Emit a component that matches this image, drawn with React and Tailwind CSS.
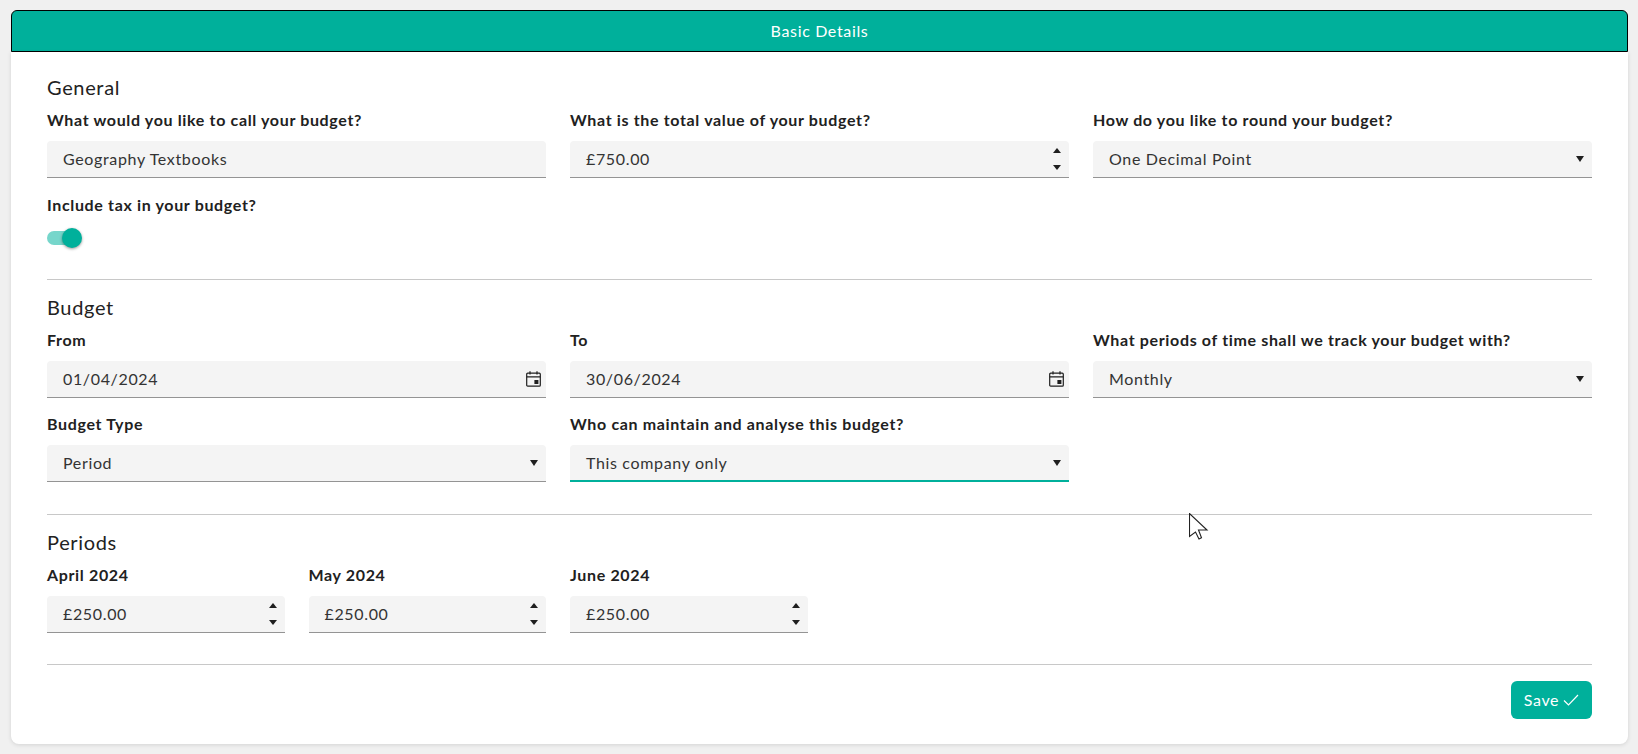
const font = { fontFamily: '"Lato", "Noto Sans", sans-serif' };

function Label({ children }) {
  return <div className="h-6 mb-[9px] text-[16px] leading-6 font-bold text-[#212121] whitespace-nowrap">{children}</div>;
}

function Stepper() {
  return (
    <div className="flex flex-col gap-3 items-center">
      <svg width="8" height="5" viewBox="0 0 8 5"><path d="M4 0L8 5H0z" fill="#1f1f1f" /></svg>
      <svg width="8" height="5" viewBox="0 0 8 5"><path d="M0 0h8L4 5z" fill="#1f1f1f" /></svg>
    </div>
  );
}

function Caret() {
  return <svg width="8" height="6" viewBox="0 0 8 6"><path d="M0 0h8L4 6z" fill="#1f1f1f" /></svg>;
}

function Calendar() {
  return (
    <svg className="-mr-[3px]" width="15" height="16" viewBox="0 0 15 16" fill="none" stroke="#1f1f1f" strokeWidth="1.2">
      <rect x="0.7" y="2.2" width="13.6" height="13" rx="1" />
      <path d="M0.7 5.8h13.6M4 0.3v3.2M11 0.3v3.2" />
      <rect x="8.4" y="9" width="4" height="4" fill="#1f1f1f" stroke="none" />
    </svg>
  );
}

function Field({ label, value, icon, focus }) {
  return (
    <div className="min-w-0">
      <Label>{label}</Label>
      <div className={`h-[37px] flex items-center justify-between pl-4 pr-2 bg-[#f4f4f4] rounded-t text-[16px] text-[#333] ${focus ? 'border-b-2 border-[#00b09b]' : 'border-b border-[#949494]'}`}>
        <span>{value}</span>
        {icon}
      </div>
    </div>
  );
}

function Heading({ children }) {
  return <div className="h-7 mb-[7px] text-[20px] leading-7 text-[#222]">{children}</div>;
}

export default function App() {
  return (
    <div style={font} className="relative h-[754px] bg-[#f0f0f0] pt-[10px] pl-[11px] pr-[10px] overflow-hidden tracking-[0.65px]">
      <div className="h-[42px] flex items-center justify-center bg-[#00b09b] border border-black rounded-t-md text-white text-[16px]">
        Basic Details
      </div>
      <div className="h-[692px] bg-white rounded-b-lg shadow-[0_1px_4px_rgba(0,0,0,0.12)] px-9 pt-[21px]">
        <Heading>General</Heading>
        <div className="grid grid-cols-3 gap-x-6">
          <Field label="What would you like to call your budget?" value="Geography Textbooks" />
          <Field label="What is the total value of your budget?" value="£750.00" icon={<Stepper />} />
          <Field label="How do you like to round your budget?" value="One Decimal Point" icon={<Caret />} />
        </div>
        <div className="mt-[15px]">
          <Label>Include tax in your budget?</Label>
          <div className="relative w-9 h-6 mt-px flex items-center">
            <div className="w-[34px] h-[14px] rounded-full bg-[#76d6cb]" />
            <div className="absolute left-[15px] top-[2px] w-5 h-5 rounded-full bg-[#00b09b] shadow-[0_1px_3px_rgba(0,0,0,0.4)]" />
          </div>
        </div>
        <div className="mt-[29px] mb-[13px] border-t border-[#c8c8c8]" />
        <Heading>Budget</Heading>
        <div className="grid grid-cols-3 gap-x-6 gap-y-[14px]">
          <Field label="From" value="01/04/2024" icon={<Calendar />} />
          <Field label="To" value="30/06/2024" icon={<Calendar />} />
          <Field label="What periods of time shall we track your budget with?" value="Monthly" icon={<Caret />} />
          <Field label="Budget Type" value="Period" icon={<Caret />} />
          <Field label="Who can maintain and analyse this budget?" value="This company only" icon={<Caret />} focus />
        </div>
        <div className="mt-8 mb-[13px] border-t border-[#c8c8c8]" />
        <Heading>Periods</Heading>
        <div className="grid grid-cols-6 gap-x-6">
          <Field label="April 2024" value="£250.00" icon={<Stepper />} />
          <Field label="May 2024" value="£250.00" icon={<Stepper />} />
          <Field label="June 2024" value="£250.00" icon={<Stepper />} />
        </div>
        <div className="mt-[31px] border-t border-[#c8c8c8]" />
        <div className="flex justify-end mt-4">
          <button className="h-[38px] w-[81px] flex items-center justify-center gap-1 rounded-md bg-[#00b09b] text-white text-[16px]">
            Save
            <svg width="16" height="12" viewBox="0 0 16 12" fill="none" stroke="white" strokeWidth="1.2"><path d="M1 6.5L5.5 11 15 1" /></svg>
          </button>
        </div>
      </div>
      <svg className="absolute left-[1189px] top-[513px]" width="20" height="28" viewBox="0 0 20 28">
        <path d="M0.5 0.5v23l6-4.5 3.5 7 2.5-1.2-3-7.8h8.5z" fill="white" stroke="#222" strokeWidth="1.1" />
      </svg>
    </div>
  );
}
